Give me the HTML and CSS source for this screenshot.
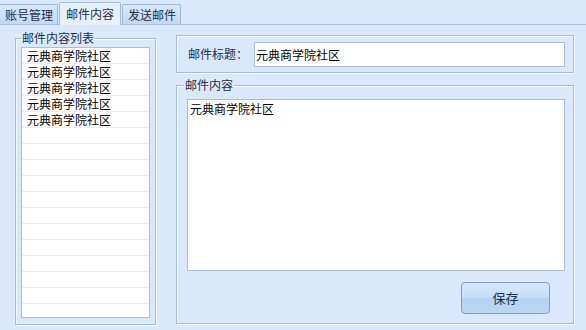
FILE: index.html
```html
<!DOCTYPE html>
<html lang="zh-CN">

<head>
    <meta charset="UTF-8">
    <title>邮件内容</title>
    <link rel="stylesheet" href="styles.css">
</head>

<body>
    <div class="tabs">
        <div class="tab">账号管理</div>
        <div class="tab active">邮件内容</div>
        <div class="tab">发送邮件</div>
    </div>
    <div class="page">
        <fieldset class="group list-group">
            <legend>邮件内容列表</legend>
            <ul class="mail-list">
                <li>元典商学院社区</li>
                <li>元典商学院社区</li>
                <li>元典商学院社区</li>
                <li>元典商学院社区</li>
                <li>元典商学院社区</li>
            </ul>
        </fieldset>
        <div class="editor">
            <div class="title-box">
                <label for="mailTitle">邮件标题：</label>
                <input type="text" id="mailTitle" value="元典商学院社区">
            </div>
            <fieldset class="group body-group">
                <legend>邮件内容</legend>
                <textarea id="mailBody">元典商学院社区</textarea>
                <button id="saveButton">保存</button>
            </fieldset>
        </div>
    </div>
</body>

</html>
```

FILE: styles.css
```css
body {
    font-family: "Noto Sans CJK SC", "DejaVu Sans", sans-serif;
    font-size: 12px;
    line-height: 14px;
    margin: 0;
    width: 586px;
    height: 330px;
    background: #d9e9fb;
    color: #000;
    overflow: hidden;
}

.tabs {
    display: flex;
    align-items: flex-end;
    height: 24px;
    border-bottom: 1px solid #a9c2de;
    gap: 1px;
}

.tab {
    height: 19px;
    padding: 0 4px 0 5px;
    line-height: 19px;
    color: #1b2f48;
    border: 1px solid #9fb9d8;
    border-bottom: none;
    border-radius: 2px 2px 0 0;
    background: linear-gradient(#d9e8f9, #c3d8f1);
}

.tab:first-child {
    border-left: none;
    border-radius: 0 2px 0 0;
}

.tab.active {
    height: 22px;
    padding: 0 6px;
    line-height: 21px;
    margin-bottom: -1px;
    background: #e6f1fd;
    border-color: #a3bddb;
}

.page {
    display: flex;
    align-items: flex-start;
    gap: 20px;
    padding-left: 15px;
}

.group {
    margin: 0;
    border: 1px solid #a6bdd8;
    box-shadow: inset 1px 1px 0 #f4f9ff, 1px 1px 0 #f4f9ff;
    color: #1b2f48;
}

.group legend {
    padding: 0 1px;
    line-height: 14px;
}

.list-group {
    margin-top: 6px;
    width: 139px;
    padding: 2px 5px 0;
    box-sizing: border-box;
    height: 294px;
}

.mail-list {
    list-style: none;
    margin: 0;
    padding: 0;
    width: 127px;
    height: 269px;
    border: 1px solid #a9bfd8;
    background: repeating-linear-gradient(to bottom, #fff 0 15px, #ececec 15px 16px);
    color: #000;
}

.mail-list li {
    height: 16px;
    line-height: 15px;
    padding-left: 5px;
}

.editor {
    margin-top: 10px;
    width: 398px;
    display: flex;
    flex-direction: column;
    gap: 5px;
}

.title-box {
    display: flex;
    align-items: center;
    height: 36px;
    padding: 0 8px 0 11px;
    border: 1px solid #a6bdd8;
    box-shadow: inset 1px 1px 0 #f4f9ff, 1px 1px 0 #f4f9ff;
}

.title-box label {
    width: 66px;
    color: #1b2f48;
}

.title-box input {
    flex: 1;
    height: 25px;
    box-sizing: border-box;
    margin: 0;
    padding: 0 1px;
    border: 1px solid #a9bfd8;
    font: inherit;
    color: #000;
    outline: none;
}

.body-group {
    display: flex;
    flex-direction: column;
    padding: 7px 8px 9px 10px;
}

.body-group legend {
    margin-left: -3px;
}

.body-group textarea {
    height: 172px;
    box-sizing: border-box;
    margin: 0;
    padding: 2px 2px;
    border: 1px solid #a9bfd8;
    font: inherit;
    color: #000;
    resize: none;
    outline: none;
}

#saveButton {
    align-self: flex-end;
    margin: 11px 15px 0 0;
    width: 89px;
    height: 32px;
    font: inherit;
    font-size: 13px;
    color: #1b2f48;
    border: 1px solid #7f9ec2;
    border-radius: 4px;
    background: linear-gradient(#d6e8fc 0, #c6ddf7 50%, #b4d2f2 51%, #b9d6f4 100%);
}
```
